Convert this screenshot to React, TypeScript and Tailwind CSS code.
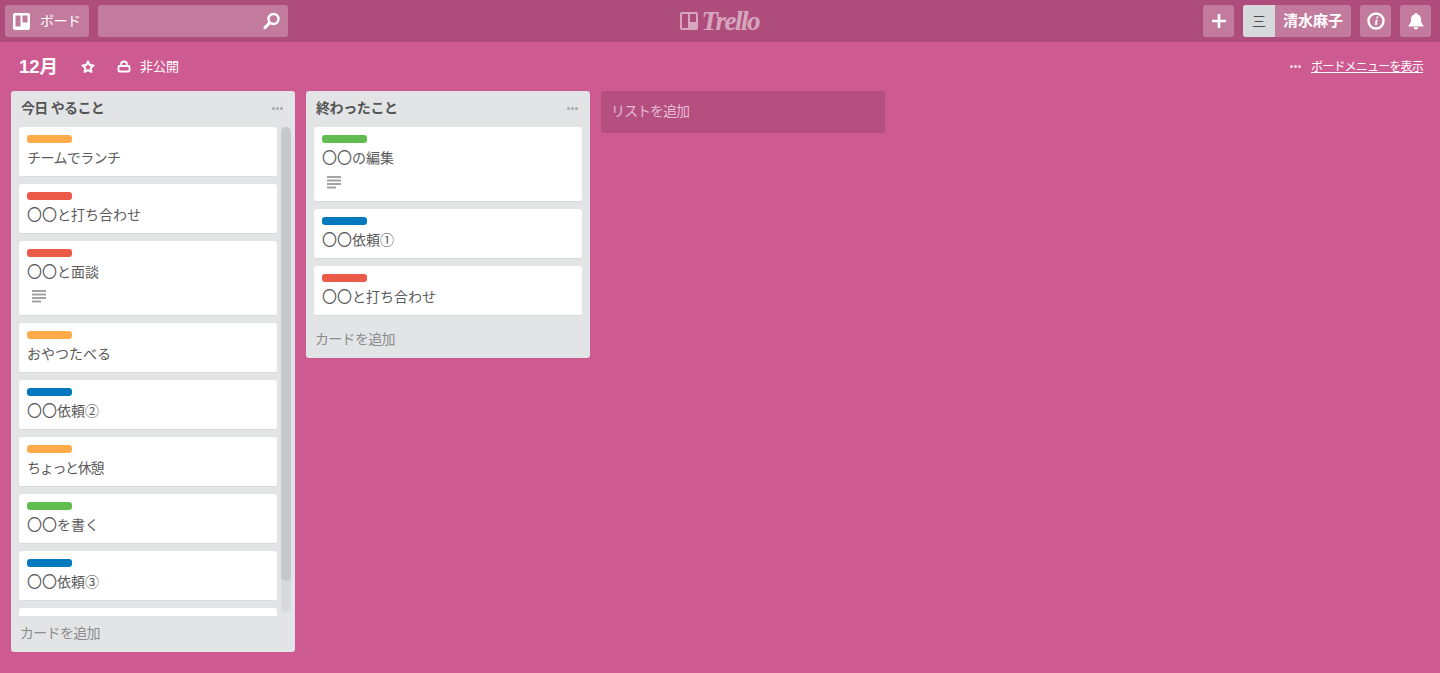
import React from "react";

const JP = "font-['Liberation_Sans','Noto_Sans_CJK_JP',sans-serif]";

const Lines = () => (
  <svg width="14" height="14" viewBox="0 0 14 14" className="block">
    <rect x="0" y="0" width="14" height="2" fill="#a3a3a3" />
    <rect x="0" y="3.5" width="14" height="2" fill="#a3a3a3" />
    <rect x="0" y="7" width="14" height="2" fill="#a3a3a3" />
    <rect x="0" y="10.500" width="9" height="2" fill="#a3a3a3" />
  </svg>
);

const Dots = ({ c = "#a8a8a8" }: { c?: string }) => (
  <svg width="11" height="3" viewBox="0 0 11 3" className="block">
    <circle cx="1.500" cy="1.500" r="1.500" fill={c} />
    <circle cx="5.500" cy="1.500" r="1.500" fill={c} />
    <circle cx="9.500" cy="1.500" r="1.500" fill={c} />
  </svg>
);

const colors: Record<string, string> = {
  o: "bg-[#ffab4a]",
  r: "bg-[#eb5a46]",
  b: "bg-[#0079bf]",
  g: "bg-[#61bd4f]",
};

type C = { l: string; t: string; d?: boolean; k?: string; circles?: boolean };

const Card = ({ l, t, d, k = "", circles, w }: C & { w: string }) => (
  <div className={`shrink-0 rounded-[3px] bg-white border-b border-[#d6dadc] px-2 pt-2 pb-[6px] ${w}`}>
    <div className={`h-2 w-[45px] rounded-[3px] ${colors[l]}`} />
    <div className={`mt-[3px] h-[24px] text-[14px] leading-[24px] text-[#5a5a5a] ${k}`}>
      {circles && <span className="text-[15px]">〇〇</span>}
      {t}
    </div>
    {d && (
      <div className="h-[25px] pl-[5px] pt-[6px]">
        <Lines />
      </div>
    )}
  </div>
);

const ListHead = ({ t, k }: { t: string; k: string }) => (
  <div className="flex h-[36px] items-center justify-between pl-[10px] pr-[12px] pb-[2px] shrink-0">
    <span className={`text-[14px] font-bold text-[#555555] leading-[18px] ${k}`}>{t}</span>
    <Dots />
  </div>
);

const AddCard = () => (
  <div className="h-[36px] shrink-0 pl-[9px] text-[14px] leading-[35px] tracking-[-0.7px] text-[#8c8c8c]">カードを追加</div>
);

const list1: C[] = [
  { l: "o", t: "チームでランチ", k: "tracking-[-0.6px]" },
  { l: "r", t: "と打ち合わせ", circles: true },
  { l: "r", t: "と面談", d: true, circles: true },
  { l: "o", t: "おやつたべる" },
  { l: "b", t: "依頼②", circles: true },
  { l: "o", t: "ちょっと休憩", k: "tracking-[-1.3px]" },
  { l: "g", t: "を書く", circles: true },
  { l: "b", t: "依頼③", circles: true },
  { l: "o", t: "" },
];

const list2: C[] = [
  { l: "g", t: "の編集", d: true, circles: true },
  { l: "b", t: "依頼①", circles: true },
  { l: "r", t: "と打ち合わせ", circles: true },
];

const HBtn = ({ children, cls = "w-[31px]" }: { children: React.ReactNode; cls?: string }) => (
  <div className={`h-[32px] rounded-[3px] bg-[#c27a9d] flex items-center justify-center ${cls}`}>{children}</div>
);

export default function App() {
  return (
    <div className={`h-[673px] w-[1440px] overflow-hidden bg-[#cd5a91] flex flex-col ${JP}`}>
      <header className="h-[42px] shrink-0 bg-[#ae4d7b] flex items-center pl-[5px] pr-[9px]">
        <div className="h-[32px] w-[84px] rounded-[3px] bg-[#c27a9d] flex items-center pl-[8px] gap-[10px]">
          <svg width="17" height="17" viewBox="0 0 17 17">
            <rect width="17" height="17" rx="2" fill="#fff" />
            <rect x="2.500" y="2.500" width="5" height="11" fill="#c27a9d" />
            <rect x="9.500" y="2.500" width="5" height="7" fill="#c27a9d" />
          </svg>
          <span className="text-[14px] text-white leading-none tracking-[-0.5px]">ボード</span>
        </div>
        <div className="ml-[9px] h-[32px] w-[190px] rounded-[3px] bg-[#c27a9d] flex items-center justify-end pr-[7px]">
          <svg width="18" height="18" viewBox="0 0 18 18" fill="none" stroke="#fff">
            <circle cx="10.500" cy="7" r="5" strokeWidth="2.400" />
            <path d="M6.800 10.800 2 15.600" strokeWidth="3" strokeLinecap="round" />
          </svg>
        </div>
        <div className="flex-1 flex justify-center items-center pr-[52px]">
          <div className="flex items-center gap-[4px] opacity-50">
            <svg width="18" height="18" viewBox="0 0 18 18">
              <path fillRule="evenodd" d="M2 0h14a2 2 0 0 1 2 2v14a2 2 0 0 1-2 2H2a2 2 0 0 1-2-2V2a2 2 0 0 1 2-2Zm0 2v14h6V2H2Zm8 0v8h6V2h-6Z" fill="#fff" />
            </svg>
            <span className="font-['Liberation_Serif',serif] italic font-bold text-[27px] leading-none text-white tracking-[-1.500px] w-[58px]">Trello</span>
          </div>
        </div>
        <HBtn>
          <svg width="16" height="16" viewBox="0 0 16 16"><path d="M8 1v14M1 8h14" stroke="#fff" strokeWidth="2.600" /></svg>
        </HBtn>
        <div className="ml-[9px] h-[32px] w-[108px] rounded-[3px] bg-[#c27a9d] flex items-center overflow-hidden">
          <div className="h-[32px] w-[32px] bg-[#d6dadc] flex items-center justify-center text-[14px] text-[#4d4d4d]">三</div>
          <span className="pl-[8px] text-[15px] font-bold text-white">清水麻子</span>
        </div>
        <HBtn cls="ml-[9px] w-[31px]">
          <svg width="18" height="18" viewBox="0 0 18 18">
            <circle cx="9" cy="9" r="7.500" fill="none" stroke="#fff" strokeWidth="2.400" />
            <path d="M9.600 4.400h1.800l-.3 1.900H9.300ZM8.800 7.400h1.900l-1 5.800H7.800Z" fill="#fff" />
          </svg>
        </HBtn>
        <HBtn cls="ml-[9px] w-[31px]">
          <svg width="18" height="18" viewBox="0 0 18 18" fill="#fff">
            <path d="M9 1a1.300 1.300 0 0 1 1.300 1.200C12.700 2.800 14 4.800 14 7.200c0 3 .6 4.500 2.500 6.300v1H1.500v-1C3.400 11.700 4 10.200 4 7.200c0-2.400 1.300-4.400 3.700-5A1.300 1.300 0 0 1 9 1Z" />
            <path d="M6.800 15.300h4.400a2.200 2.200 0 0 1-4.400 0Z" />
          </svg>
        </HBtn>
      </header>

      <div className="h-[49px] shrink-0 flex items-center pl-[19px] pr-[17px]">
        <span className="text-[18.500px] font-bold text-white w-[62px]">12月</span>
        <svg width="14" height="14" viewBox="0 0 14 14" fill="none" stroke="#fff" strokeWidth="2" strokeLinejoin="round">
          <path d="m7 1.500 1.700 3.500 3.800.5-2.800 2.600.7 3.800L7 10.100l-3.400 1.800.7-3.800L1.500 5.500l3.800-.5Z" />
        </svg>
        <svg className="ml-[22px]" width="14" height="14" viewBox="0 0 14 14" fill="none" stroke="#fff" strokeWidth="1.800">
          <rect x="1.500" y="6" width="11" height="5.500" rx="1" />
          <path d="M4 6V4.500a3 3 0 0 1 6 0V6" />
        </svg>
        <span className="ml-[9px] text-[13px] text-white">非公開</span>
        <div className="ml-auto flex items-center">
          <Dots c="#f3dce7" />
          <span className="ml-[10px] text-[12px] text-white underline tracking-[-0.8px]">ボードメニューを表示</span>
        </div>
      </div>

      <div className="flex items-start pl-[11px] gap-[11px]">
        <section className="w-[284px] h-[561px] rounded-[3px] bg-[#e2e4e6] flex flex-col">
          <ListHead t="今日 やること" k="tracking-[-0.7px]" />
          <div className="h-[489px] pl-[8px] flex gap-[4px] overflow-hidden">
            <div className="flex flex-col gap-[7px] overflow-hidden">
              {list1.map((c, i) => (
                <Card key={i} w="w-[258px]" {...c} />
              ))}
            </div>
            <div className="w-[10px] h-[485px] rounded-[5px] bg-[#d6dadc] shrink-0">
              <div className="h-[454px] rounded-[5px] bg-[#c4c9cc]" />
            </div>
          </div>
          <AddCard />
        </section>

        <section className="w-[284px] rounded-[3px] bg-[#e2e4e6] flex flex-col">
          <ListHead t="終わったこと" k="tracking-[-0.4px]" />
          <div className="pl-[8px] flex flex-col gap-[7px]">
            {list2.map((c, i) => (
              <Card key={i} w="w-[268px]" {...c} />
            ))}
          </div>
          <div className="pt-[6px]">
            <AddCard />
          </div>
        </section>

        <div className="w-[284px] h-[42px] rounded-[3px] bg-[#b44f80] pl-[10px] text-[14px] leading-[40px] tracking-[-1px] text-[#e6bdd2]">リストを追加</div>
      </div>
    </div>
  );
}
